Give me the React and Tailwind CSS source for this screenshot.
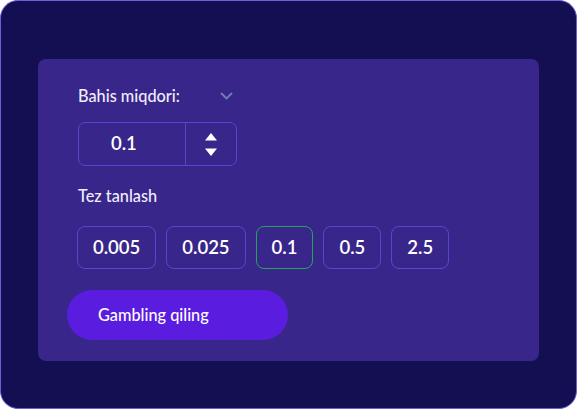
export default function App() {
  const chips = ["0.005", "0.025", "0.1", "0.5", "2.5"];
  return (
    <div className="w-[577px] h-[409px] bg-white" style={{ fontFamily: "Lato, 'Noto Sans', sans-serif" }}>
      <div className="h-full rounded-[18px] border border-[#6d5fd8] bg-[#130f52] pl-[37px] pt-[58px]">
        <div className="w-[501px] h-[302px] rounded-[8px] bg-[#39268b] pl-[40px] pt-[27px] flex flex-col">
          <div className="flex items-center h-[20px]">
            <span className="text-[16.3px] text-[#f1eefc] font-medium">Bahis miqdori:</span>
            <svg className="ml-[40px]" width="13" height="8" viewBox="0 0 13 8" fill="none">
              <path d="M1 1l5.5 5.5L12 1" stroke="#6f7fb8" strokeWidth="1.8" />
            </svg>
          </div>
          <div className="mt-[16px] flex w-[159px] h-[44px] rounded-[7px] border border-[#5846cf]">
            <div className="w-[106px] flex items-center pl-[32px] text-[18.5px] font-semibold text-white">0.1</div>
            <div className="flex-1 border-l border-[#5846cf] flex flex-col items-center justify-center gap-[7px]">
              <svg width="12" height="8" viewBox="0 0 12 8"><path d="M6 0L12 7.5H0Z" fill="#fff" /></svg>
              <svg width="12" height="8" viewBox="0 0 12 8"><path d="M0 0.5H12L6 8Z" fill="#fff" /></svg>
            </div>
          </div>
          <div className="mt-[20px] h-[20px] flex items-center text-[16.3px] text-[#f1eefc] font-medium">Tez tanlash</div>
          <div className="mt-[20px] flex gap-[10px] -ml-[1px]">
            {chips.map((c) => (
              <div
                key={c}
                className={
                  c === "0.1"
                    ? "h-[43px] px-[15px] flex items-center rounded-[8px] border border-[#22a55a] text-[18.5px] font-semibold text-white"
                    : "h-[43px] px-[15px] flex items-center rounded-[8px] border border-[#5846cf] text-[18.5px] font-semibold text-white"
                }
              >
                {c}
              </div>
            ))}
          </div>
          <button className="mt-[21px] -ml-[11px] w-[221px] h-[50px] rounded-full bg-[#5a1ddf] text-left pl-[31px] text-[16.3px] font-medium text-white">
            Gambling qiling
          </button>
        </div>
      </div>
    </div>
  );
}
